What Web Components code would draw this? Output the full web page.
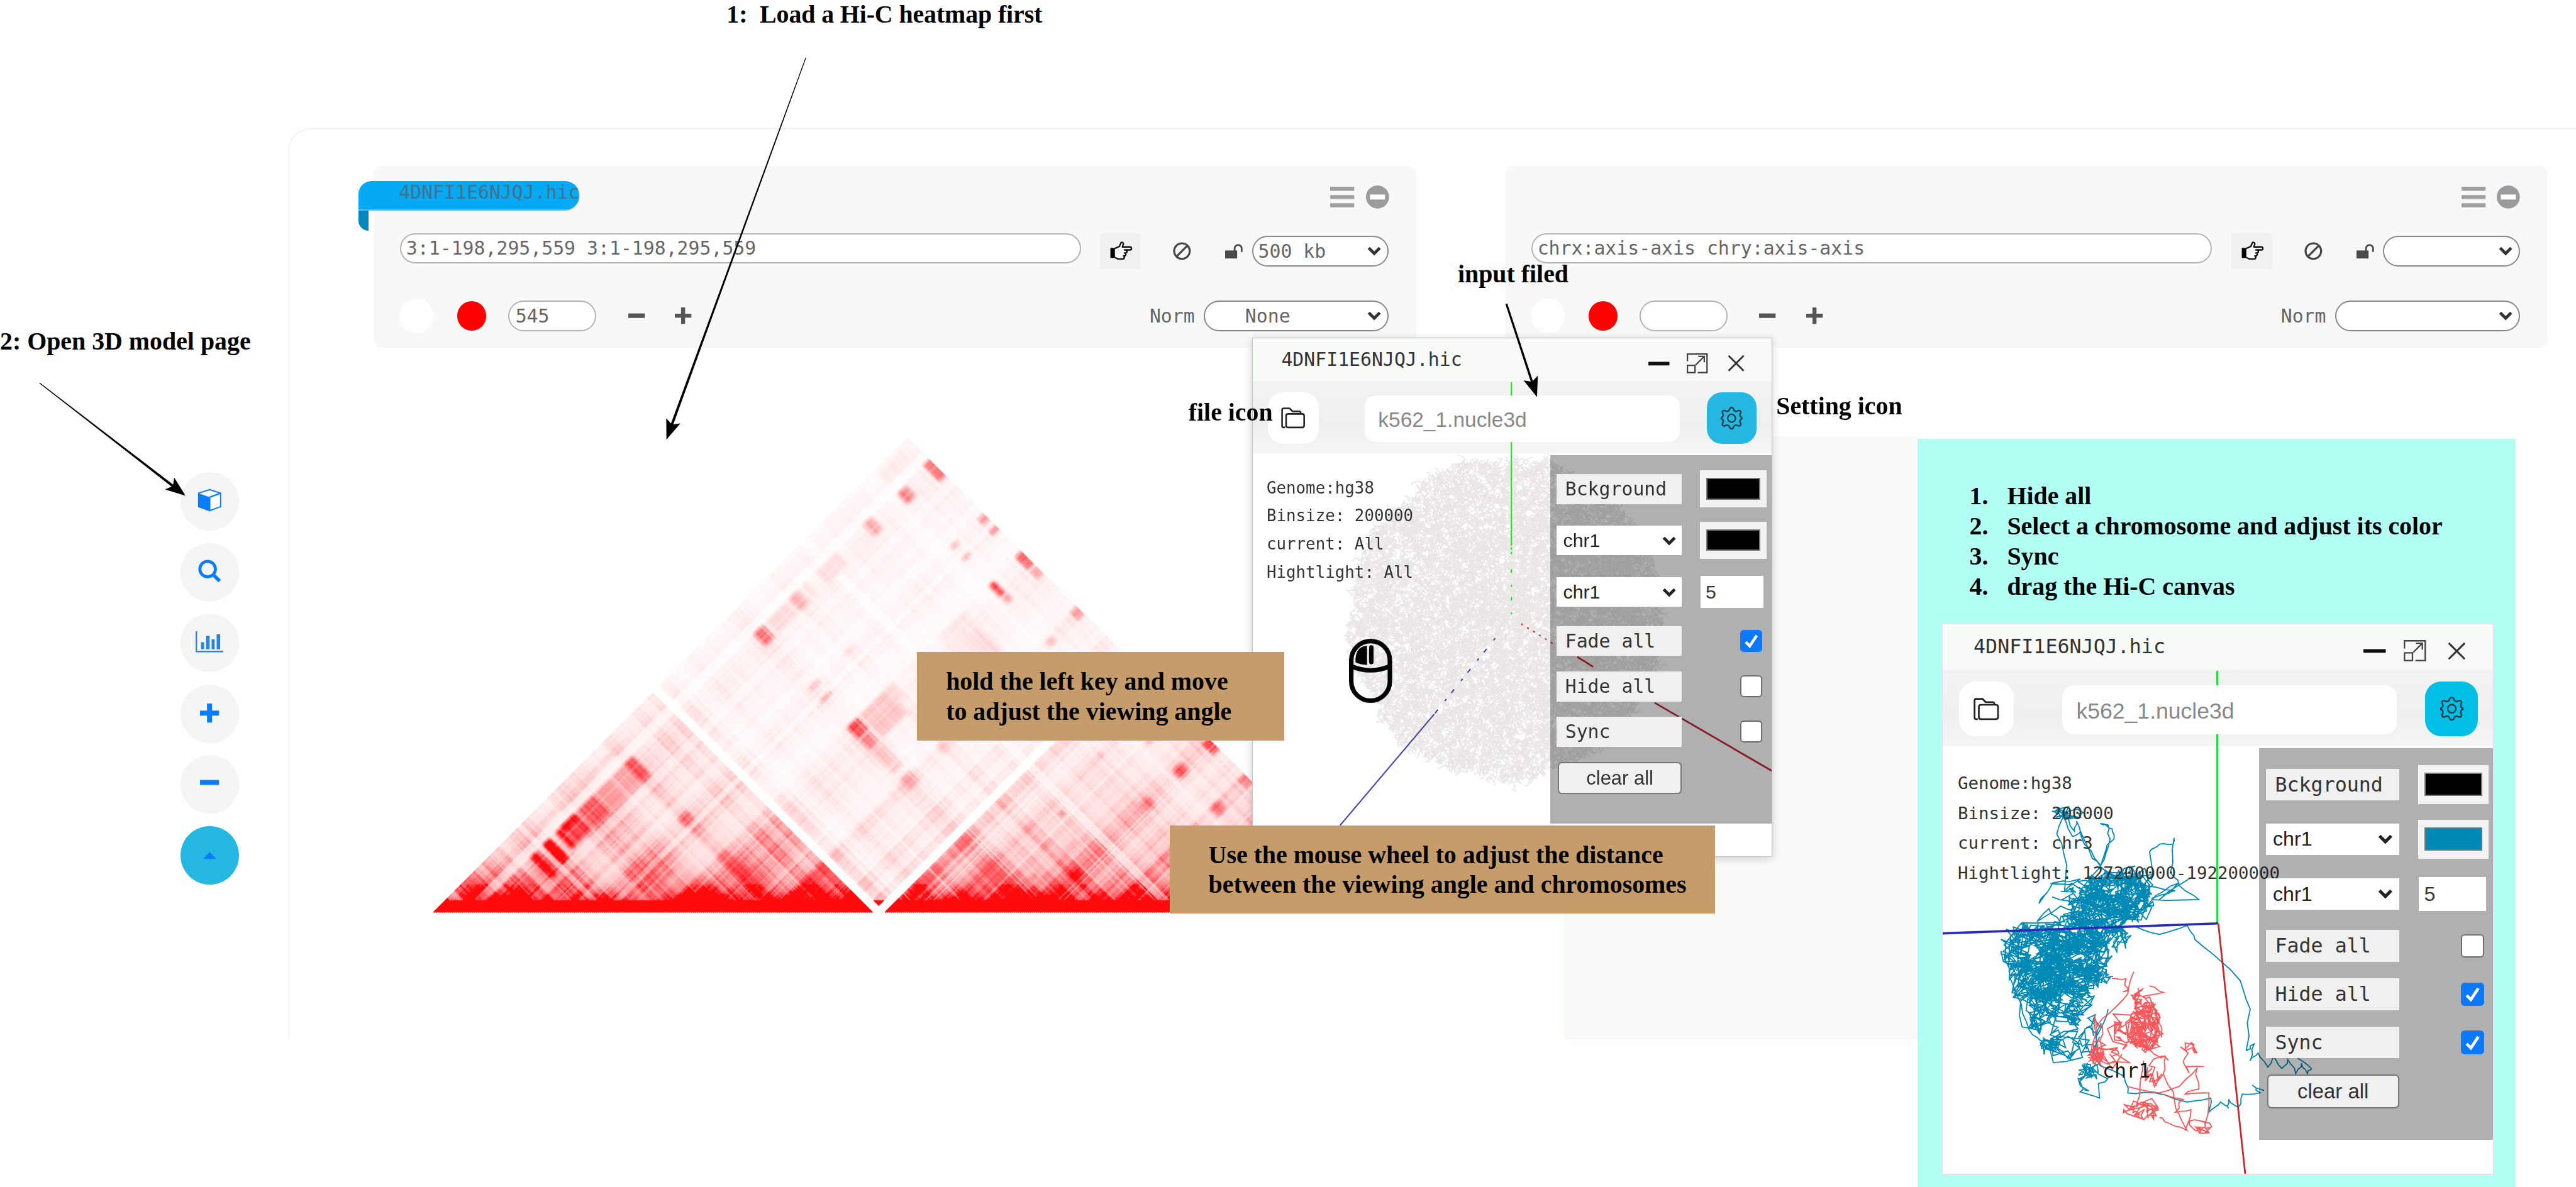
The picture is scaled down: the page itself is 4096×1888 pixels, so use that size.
<!DOCTYPE html>
<html lang="en">
<head>
<meta charset="utf-8">
<title>Hi-C 3D model guide</title>
<style>
html{--u:calc(100vw / 5137)}
body{margin:0;background:#fff;overflow:hidden}
</style>
</head>
<body>
<hic-guide></hic-guide>
<script>
/* "12u" in a style sheet is 12 design units; a window can rescale --u for its own content */
const css = (s) => s.replace(/(-?[\d.]+)u\b/g, 'calc(var(--u) * $1)');
const define = (name, style, html, after) => customElements.define(name, class extends HTMLElement {
  connectedCallback() {
    if (this.shadowRoot) return;
    const root = this.attachShadow({ mode: 'open' });
    const body = typeof html === 'function' ? html(this) : html;
    root.innerHTML = '<style>*{box-sizing:border-box}:host{box-sizing:border-box}' + css(style) + '</style>' + body;
    if (after) after(this, root);
  }
});
const rng = (seed) => () => {
  seed = (seed + 0x6D2B79F5) | 0;
  let t = Math.imul(seed ^ (seed >>> 15), 1 | seed);
  t = (t + Math.imul(t ^ (t >>> 7), 61 | t)) ^ t;
  return ((t ^ (t >>> 14)) >>> 0) / 4294967296;
};

/* ---------- icons ---------- */
const ICONS = {
  bars: ['48 41', '<path fill="#a0a0a0" d="M0 0h48v8H0zM0 16.500h48v8H0zM0 33h48v8H0z"/>'],
  disc: ['46 46', '<circle cx="23" cy="23" r="23" fill="#9b9b9e"/><path fill="#fff" d="M8 18h30v10H8z"/>'],
  hand: ['45 38', '<path d="M2 13h9v20H2z" fill="#000"/><path d="M11 14l9-4 3-7c1-2 5-1 5 2l-2 6h15c4 0 4 6 0 6H29M29 17h3c4 0 4 6 0 6h-2c4 0 3 6 0 6h-2c3 0 2 6-1 6H17l-6-3" fill="#fff" stroke="#111" stroke-width="3" stroke-linejoin="round"/>'],
  ban: ['36 36', '<circle cx="18" cy="18" r="15.500" fill="none" stroke="#444" stroke-width="4"/><path d="M28 8L8 28" stroke="#444" stroke-width="4"/>'],
  lock: ['36 30', '<path d="M0 13h24v16H0z" fill="#4a4a4a"/><path d="M19 14V9a7 7 0 0 1 14 0v7" fill="none" stroke="#4a4a4a" stroke-width="3.500"/>'],
  chev: ['28 18', '<path d="M3 3l11 11L25 3" fill="none" stroke="currentColor" stroke-width="6"/>'],
  minus: ['33 33', '<path d="M0 12h33v9H0z" fill="#555"/>'],
  plus: ['33 33', '<path d="M0 12.500h33v8H0zM12.500 0h8v33h-8z" fill="#555"/>'],
  cube: ['46 44', '<path d="M1 8L23 1l22 7v27L23 43 1 35z" fill="#fff" stroke="#0a7cff" stroke-width="2.500" stroke-linejoin="round"/><path d="M1 8l22 8v27L1 35z" fill="#0a7cff"/><path d="M23 16l22-8M23 16v27" stroke="#0a7cff" stroke-width="3"/>'],
  search: ['46 46', '<circle cx="19" cy="19" r="15.500" fill="none" stroke="#0a7cff" stroke-width="6"/><path d="M31 31l12 12" stroke="#0a7cff" stroke-width="7"/>'],
  chart: ['55 42', '<path d="M1.500 0v40.500H55" fill="none" stroke="#2b84dc" stroke-width="3"/><path d="M11 22h6v14h-6zM21 9h7v27h-7zM32 16h6v20h-6zM42 6h7v30h-7z" fill="#2b84dc"/>'],
  bigplus: ['38 38', '<path d="M0 14h38v10H0zM14 0h10v38H14z" fill="#0a7cff"/>'],
  bigminus: ['38 38', '<path d="M0 12h38v10H0z" fill="#0a7cff"/>'],
  up: ['26 14', '<path d="M0 14L13 0l13 14z" fill="#0a7cff"/>'],
  min: ['42 40', '<path d="M0 17h42v7H0z" fill="#111"/>'],
  max: ['42 40', '<path d="M1.500 16V1.500h39v37H22M1.500 24h15v14.500h-15zM18 23L35 6M23 6h12v12" fill="none" stroke="#444" stroke-width="2.800"/>'],
  close: ['34 32', '<path d="M2 1l30 30M32 1L2 31" stroke="#333" stroke-width="3.600"/>'],
  folder: ['48 42', '<path d="M8 40H5q-3 0-3-3V5q0-3 3-3h12l6 6h13q3 0 3 3v3M10 17q0-4 4-4h28q4 0 4 4v19q0 4-4 4H14q-4 0-4-4z" fill="none" stroke="#222" stroke-width="3.200"/>'],
  gear: ['16 16', '<circle cx="8" cy="8" r="2.700" fill="none" stroke="#173c48"/><path fill="none" stroke="#173c48" stroke-width="1" d="M9.300 1.600c-.4-1.300-2.200-1.300-2.600 0l-.1.300a1.900 1.900 0 0 1-2.700 1.100l-.3-.2c-1.200-.6-2.500.6-1.800 1.800l.2.300A1.900 1.900 0 0 1 .9 7.600V8.400A1.900 1.900 0 0 1 2 11.100l-.2.300c-.7 1.200.6 2.500 1.800 1.800l.3-.2a1.900 1.900 0 0 1 2.700 1.100l.1.300c.4 1.300 2.200 1.300 2.600 0l.1-.3a1.900 1.900 0 0 1 2.700-1.100l.3.200c1.200.7 2.500-.6 1.800-1.800l-.2-.3a1.900 1.900 0 0 1 1.100-2.700V7.600A1.900 1.900 0 0 1 14 4.900l.2-.3c.7-1.200-.6-2.400-1.800-1.800l-.3.200a1.900 1.900 0 0 1-2.700-1.100z"/>'],
  mouse: ['86 128', '<rect x="4.500" y="4.500" width="77" height="119" rx="38.500" fill="none" stroke="#000" stroke-width="9"/><path d="M5 55q38 16 76 0" fill="none" stroke="#000" stroke-width="9"/><path d="M36 14v38q-12 0-23-5c-1-20 6-32 23-33z"/><rect x="40" y="13" width="9" height="38" rx="4.500"/>']
};
define('ui-icon', ':host{display:block;flex:none}svg{display:block;width:100%;height:100%;overflow:visible}',
  (el) => { const [box, d] = ICONS[el.getAttribute('name')];
    const [w, h] = box.split(' ');
    return `<style>:host{width:calc(var(--u)*${w});height:calc(var(--u)*${h})}</style><svg viewBox="0 0 ${box}">${d}</svg>`; });

/* ---------- form fields ---------- */
define('pill-field', `
:host{display:flex;align-items:center;flex:none;height:61u;border:3.5u solid #b4b4b4;border-radius:31u;background:#fff;
 padding:0 12u;font:37.4u "DejaVu Sans Mono",monospace;line-height:1;color:#666;white-space:pre}
:host([kind=select]){border-color:#888;border-width:3u;padding-left:10u;padding-right:12u;justify-content:space-between}
ui-icon{color:#333}`,
  (el) => '<span><slot></slot></span>' + (el.getAttribute('kind') === 'select' ? '<ui-icon name="chev"></ui-icon>' : ''));

/* ---------- one contact-map control panel ---------- */
define('map-panel', `
:host{display:block;position:relative;flex:none;width:2079u;height:363u;background:#f8f8f8;border-radius:16u;padding:0 55u 0 52u;
 font:37.4u "DejaVu Sans Mono",monospace;color:#666}
.row{display:flex;align-items:center}
.head{height:124u;justify-content:flex-end;gap:23u}
.locus{height:93u}.scale{height:91u;margin-top:37u}
.locus pill-field{width:273u}
.locus .text{width:1358u;margin:0 38u 12u 0;padding-left:10u}
.go{width:82u;height:72u;background:#f1f1f2;display:grid;place-items:center;margin-right:64u}
.ban{margin-right:68u}.lock{margin:0 17u 0 0}
.dot{width:58u;height:58u;border-radius:50%;background:#f00;margin-right:44u}
.dot.w{width:67u;height:70u;background:#fff;margin-right:47u}
.scale .num{width:176u;margin-right:63u}
.minus{margin-right:60u}
.norm{margin:0 18u 0 auto;line-height:1}
.scale .nsel{width:369u;padding-left:0}
.scale .nsel span{margin-left:80u}
.ribbon{position:absolute;left:-31u;top:30u;width:441u;height:59u;border-radius:26u 28u 28u 0;background:#05a9f4;border-bottom:3u solid #6cb8f3;
 padding-left:81u;line-height:44u;color:#47708a;white-space:nowrap}
.tail{position:absolute;left:-31u;top:88u;width:20u;height:42u;border-radius:0 0 0 20u;background:#0487bf}`,
  (el) => `${el.hasAttribute('file') ? `<div class="tail"></div><div class="ribbon">${el.getAttribute('file')}</div>` : ''}
  <div class="row head"><ui-icon name="bars"></ui-icon><ui-icon name="disc"></ui-icon></div>
  <div class="row locus"><pill-field class="text">${el.getAttribute('locus')}</pill-field>
    <div class="go"><ui-icon name="hand"></ui-icon></div><ui-icon class="ban" name="ban"></ui-icon><ui-icon class="lock" name="lock"></ui-icon>
    <pill-field kind="select">${el.getAttribute('bin') || ''}</pill-field></div>
  <div class="row scale"><div class="dot w"></div><div class="dot"></div><pill-field class="num">${el.getAttribute('max') || ''}</pill-field>
    <ui-icon class="minus" name="minus"></ui-icon><ui-icon name="plus"></ui-icon>
    <span class="norm">Norm</span><pill-field class="nsel" kind="select"><span>${el.getAttribute('norm') || ''}</span></pill-field></div>`);

/* ---------- side tools ---------- */
define('tool-rail', `
:host{display:flex;flex-direction:column;gap:24.5u}
div{width:117u;height:116.700u;border-radius:50%;background:#f5f5f5;display:grid;place-items:center}
div:not(:last-child) ui-icon{margin-bottom:4u}
div:last-child{background:#23b7e1}`,
  () => ['cube', 'search', 'chart', 'bigplus', 'bigminus', 'up'].map((n) => `<div><ui-icon name="${n}"></ui-icon></div>`).join(''));

/* ---------- triangular contact map ---------- */
define('contact-map', ':host{display:block}canvas{display:block;width:100%;height:100%}', '<canvas width="1892" height="948"></canvas>',
  (el, root) => {
    const cx = root.querySelector('canvas').getContext('2d'), r = rng(17), N = 473, c = 4;
    /* contact patches: start and end of the first locus, of the second locus, strength */
    const patches = [
      [84, 160, 222, 232, .8], [84, 168, 300, 322, 1], [84, 158, 352, 375, 1.1], [84, 150, 400, 420, .8], [84, 150, 424, 480, .6], [84, 100, 420, 470, .9], [84, 155, 486, 550, .48],
      [84, 160, 556, 668, .26], [84, 158, 670, 706, .48], [34, 42, 120, 700, .16], [196, 206, 240, 300, .5], [300, 332, 670, 705, .45], [340, 352, 420, 560, .3], [455, 500, 672, 702, .4],
      [520, 545, 680, 712, .6], [455, 500, 520, 600, .25], [300, 335, 455, 500, .5], [384, 396, 440, 560, .4], [610, 625, 680, 700, .4],
      [82, 130, 1190, 1228, .38], [82, 130, 1240, 1318, .1], [82, 130, 1328, 1366, .2], [82, 130, 1380, 1400, .1], [82, 130, 1440, 1520, .09], [82, 130, 1625, 1660, .22], [90, 130, 1756, 1792, .34],
      [84, 150, 1866, 1892, .4], [10, 50, 1760, 1850, .06], [300, 325, 1866, 1892, .3], [345, 365, 1864, 1892, .26], [300, 312, 1755, 1785, .22], [345, 358, 1755, 1785, .18],
      [450, 500, 1866, 1892, .48], [510, 540, 1866, 1890, .26], [455, 500, 1756, 1776, .55], [505, 530, 1756, 1780, .22], [455, 640, 1560, 1660, .07], [520, 610, 1620, 1650, .1], [670, 702, 1864, 1892, .26], [680, 700, 1756, 1785, .16],
      [300, 312, 1190, 1230, .2], [345, 358, 1190, 1230, .2], [455, 500, 1190, 1232, .55], [505, 545, 1190, 1228, .34], [455, 545, 1240, 1340, .16], [550, 640, 1190, 1230, .15], [665, 706, 1190, 1230, .24], [455, 500, 1345, 1370, .12], [300, 312, 1330, 1365, .12], [670, 700, 1330, 1360, .14],
      [1190, 1224, 1338, 1368, .9], [1190, 1224, 1622, 1655, .4], [1190, 1224, 1752, 1790, .5], [1196, 1240, 1866, 1892, .6], [1340, 1372, 1752, 1790, .45], [1340, 1372, 1866, 1892, .4],
      [1340, 1372, 1622, 1655, .55], [1010, 1028, 1190, 1225, .4], [1075, 1090, 1190, 1225, .45], [1010, 1028, 1340, 1365, .3], [1075, 1090, 1340, 1365, .35], [1130, 1142, 1340, 1420, .3], [1050, 1062, 1440, 1455, .4], [1120, 1135, 1250, 1275, .4], [1010, 1022, 1625, 1650, .2], [1075, 1090, 1755, 1780, .22], [1430, 1450, 1622, 1650, .4], [1530, 1550, 1750, 1785, .4], [1620, 1655, 1756, 1790, .6], [1620, 1655, 1866, 1892, .5], [1756, 1785, 1866, 1892, .7]];
    const fine = [], tone = [], tad = []; let left = 0, t = 1, id = 0;
    const bands = [[56, 82, .35], [164, 190, .6], [336, 350, .45], [560, 664, .66], [380, 450, .55], [230, 296, .55], [1466, 1490, .3], [1250, 1330, .65], [1700, 1740, .5], [950, 985, .7],
      [84, 150, 1.12], [300, 332, 1.2], [455, 500, 1.2], [670, 706, 1.2], [1010, 1028, 1.3], [1075, 1090, 1.3], [1190, 1224, 1.35], [1340, 1372, 1.3], [1622, 1655, 1.25], [1756, 1790, 1.25]];
    for (let i = 0; i < N; i++) {
      const p = i * c;
      if (left-- <= 0) { id++; left = 2 + r() * 8; t = .62 + r() * .72; }
      tad[i] = id; tone[i] = t; fine[i] = (i ? fine[i - 1] * .3 : .3) + .7 * (.62 + .78 * r());
      if (r() < .03) fine[i] = .45;
      for (const [a, b, k] of bands) if (p >= a && p <= b) tone[i] *= k;
    }
    const gap = (p) => p > 872 && p < 897;
    const ramp = (q) => { q = Math.max(0, Math.min(1, q)); return q * q * (3 - 2 * q); };
    const edge = (x, lo, hi) => ramp((x - lo + 10) / 20) * ramp((hi + 10 - x) / 20);
    for (let i = 0; i < N; i++) {
      const a = i * c, row = patches.filter((q) => a > q[0] - 11 && a < q[1] + 11);
      for (let j = i; j < N; j++) {
        const b = j * c, h = (b - a) / 2; let v;
        if (gap(a) || gap(b)) v = .004;
        else {
          const m = fine[i] * fine[j] * tone[i] * tone[j];
          if ((a < 884) === (b < 884)) {
            v = Math.pow(42 / (h + 3), 1.2) * (.12 + .95 * m) * (tad[i] === tad[j] ? 1.3 : 1);
            if (h > 55) v = v > .55 ? .55 + (v - .55) * .35 : v;
            v += .015;
          } else v = .01 + .03 * m + .1 * Math.exp(-h / 210) * m;
          for (const q of row) { const e = edge(a, q[0], q[1]) * edge(b, q[2], q[3]);
            if (e) v = Math.max(v, v * (1 - e) + e * q[4] * (.45 + .7 * fine[i] * fine[j])); }
          if (h < 24) v = 1;
        }
        cx.fillStyle = `rgba(255,0,${v > .95 ? 0 : 12},${Math.min(1, v)})`;
        const x = (a + b) / 2 + c / 2, y = 946 - h;
        cx.beginPath(); cx.moveTo(x - c / 2 - .2, y); cx.lineTo(x, y - c / 2 - .2); cx.lineTo(x + c / 2 + .2, y); cx.lineTo(x, y + c / 2 + .2); cx.fill();
      }
    }
  });

/* ---------- 3D scenes ---------- */
define('sphere-scene', ':host{display:block}canvas,svg{position:absolute;inset:0;width:100%;height:100%;display:block}',
  `<canvas width="1037" height="1037"></canvas><svg viewBox="0 0 1037 1037" fill="none" stroke-width="2.600">
   <path stroke="#1fe01f" d="M516.500 88V415"/><path stroke="#1fe01f" d="M516.500 418V436" stroke-dasharray="5 4"/><path stroke="#1fe01f" d="M516.500 462V570" stroke-dasharray="7 24 4 20"/>
   <path stroke="#4a41a8" d="M362 752L174 974"/><path stroke="#4a41a8" d="M484 600L362 752" stroke-dasharray="5 22 9 16"/>
   <path stroke="#c0263c" d="M536 571L605 614" stroke-dasharray="4 10"/><path stroke="#c0263c" stroke-width="3.500" d="M648 637l32 20M803 729l234 136"/></svg>`,
  (el, root) => {
    const cx = root.querySelector('canvas').getContext('2d'), r = rng(5);
    cx.strokeStyle = '#e9e6e5'; cx.lineWidth = 1.9;
    for (let k = 0; k < 10500; k++) {
      const an = r() * 6.283, q = Math.pow(r(), .53), wob = 1 + .015 * Math.sin(an * 9) + .01 * Math.sin(an * 23);
      let x = 506 + Math.cos(an) * q * 312 * wob, y = 561 + Math.sin(an) * q * 320 * wob;
      cx.beginPath(); cx.moveTo(x, y);
      for (let s = 0; s < 4; s++) { x += (r() - .5) * 16; y += (r() - .5) * 16; cx.lineTo(x, y); }
      cx.stroke();
    }
  });

define('strand-scene', ':host{display:block}svg{position:absolute;inset:0;width:100%;height:100%;display:block}text{font:40px "DejaVu Sans Mono",monospace}',
  () => {
    const r = rng(29), px = (x, y) => [(x / 1.2645 - 72), (y / 1.9406 + 316)];
    const line = (p) => 'M' + p.map(([x, y]) => px(x, y).map((n) => n.toFixed(1)).join(' ')).join('L');
    /* jitter a guide strand so that it reads as a chain of short segments */
    const strand = (p, j) => { const o = []; for (let i = 0; i < p.length - 1; i++) for (let k = 0; k < 3; k++) {
      const f = k / 3; o.push([p[i][0] + (p[i + 1][0] - p[i][0]) * f + (k ? (r() - .5) * j : 0), p[i][1] + (p[i + 1][1] - p[i][1]) * f + (k ? (r() - .5) * j : 0)]); }
      o.push(p[p.length - 1]); return line(o); };
    /* a chain that wanders over the whole ellipse around (cx, cy) */
    const tangle = (cx, cy, rx, ry, n) => { const o = [], f1 = .11 + r() * .2, f2 = .17 + r() * .2, ph = r() * 6, jx = Math.min(22, rx * .4), jy = Math.min(30, ry * .4);
      for (let i = 0; i < n; i++) { const q = .25 + .6 * Math.abs(Math.sin(i * f2 * .43 + ph)), a = i * f1 + ph + Math.sin(i * f2) * 1.6;
        o.push([cx + Math.cos(a) * rx * q + (r() - .5) * 2 * jx, cy + Math.sin(a) * ry * q + (r() - .5) * 2 * jy]); }
      return line(o); };
    const teal = [[525, 430, 90, 85, 300], [495, 500, 90, 80, 280], [575, 440, 50, 110, 120], [440, 590, 90, 75, 240], [320, 650, 80, 95, 270], [430, 680, 85, 95, 290], [300, 740, 40, 70, 80],
      [340, 790, 65, 85, 210], [410, 740, 85, 85, 220], [400, 850, 78, 85, 130], [335, 880, 42, 90, 120], [400, 930, 55, 60, 40], [405, 1030, 60, 65, 80], [465, 1150, 42, 65, 50], [415, 115, 45, 28, 30], [490, 740, 32, 50, 50], [535, 610, 28, 60, 44], [390, 430, 58, 60, 22], [465, 980, 28, 80, 34]]
      .map((a) => tangle(...a)).join('') + [
      [[370, 115], [410, 95], [380, 200], [405, 320], [400, 420], [440, 375], [370, 390], [335, 470], [355, 430]],
      [[395, 130], [420, 210], [440, 190], [470, 295], [500, 340], [530, 380]], [[400, 125], [425, 190], [430, 150], [450, 240], [490, 320]],
      [[490, 160], [520, 180], [525, 220], [505, 260], [490, 330], [560, 390]], [[490, 160], [510, 165], [515, 220], [500, 300], [450, 400]],
      [[620, 380], [615, 270], [640, 240], [675, 240], [677, 215], [668, 350], [690, 400], [740, 455], [620, 455]],
      [[600, 400], [680, 420], [640, 455], [720, 370]], [[600, 500], [630, 440], [690, 390], [665, 430], [620, 450]],
      [[290, 545], [390, 545], [360, 490], [330, 540], [390, 480], [420, 500]], [[250, 620], [250, 690], [270, 790], [290, 860], [310, 960], [345, 1010], [375, 1020]],
      [[580, 560], [640, 590], [710, 555], [730, 610], [800, 700], [845, 770], [870, 880], [860, 1040], [880, 1015], [870, 1080], [890, 1050], [915, 1105], [930, 1065], [950, 1110], [965, 1075], [985, 1130], [1000, 1090], [1015, 1130], [1025, 1110], [990, 1070]],
      [[510, 880], [490, 960], [470, 1040], [490, 1100], [550, 1140], [560, 1205], [630, 1205], [710, 1240], [770, 1225], [765, 1280], [795, 1240], [815, 1265], [815, 1230], [840, 1260], [850, 1210], [895, 1205], [875, 1175], [905, 1195]]
    ].map((p) => strand(p, 9)).join('');
    const red = [[605, 960, 42, 95, 150], [560, 960, 60, 70, 60], [520, 1050, 58, 60, 46], [600, 850, 36, 50, 50], [595, 1275, 40, 45, 60], [480, 990, 22, 90, 26], [725, 1080, 36, 62, 20], [745, 1335, 28, 28, 26], [535, 790, 28, 35, 8], [635, 1120, 28, 60, 24]]
      .map((a) => tangle(...a)).join('') + [
      [[575, 735], [560, 820], [510, 900], [480, 950], [465, 1060], [500, 1110]], [[615, 790], [650, 815], [600, 830], [640, 900], [645, 990]],
      [[595, 1020], [640, 1065], [655, 1065], [650, 1130], [675, 1200], [690, 1290], [710, 1350], [660, 1320], [640, 1300]],
      [[560, 1180], [640, 1205], [690, 1180], [735, 1110], [740, 1190], [705, 1210], [765, 1205], [755, 1330]], [[600, 1080], [590, 1200], [580, 1260]],
      [[650, 1210], [700, 1230], [680, 1280], [720, 1270], [705, 1350]]
    ].map((p) => strand(p, 10)).join('');
    return `<svg viewBox="0 0 1102.500 1099" preserveAspectRatio="none" fill="none">
    <path stroke="#0089b5" stroke-width="2.300" d="${teal}"/><path stroke="#fb5659" stroke-width="2.300" d="${red}"/>
    <path stroke="#22dd44" stroke-width="4" d="M550 93V598"/><path stroke="#2a2ab8" stroke-width="4.500" d="M0 618L552 598"/><path stroke="#c8282c" stroke-width="3.500" d="M552 598L606 1099"/>
    <text x="320" y="906" fill="#1a1a1a">chr1</text></svg>`;
  });

/* ---------- 3D model window ---------- */
define('tick-box', `
:host{display:grid;place-items:center;width:43u;height:44u;border:3u solid #6d6d6d;border-radius:7u;background:#fff}
:host([on]){background:#0a78ff;border-color:#0a78ff}svg{width:34u;height:34u;display:block}`,
  (el) => el.hasAttribute('on') ? '<svg viewBox="0 0 34 34"><path d="M6 19l8 8L28 6" fill="none" stroke="#fff" stroke-width="5.500"/></svg>' : '');

define('model-window', `
:host{display:grid;grid-template-rows:88u 142u 1fr;position:absolute;isolation:isolate;width:1038u;height:1037u;background:#fff;border:2.5u solid #c4c4c4;
 font:37.400u "DejaVu Sans Mono",monospace;color:#333;overflow:hidden}
.title{display:flex;align-items:center;margin:-2.5u -2.5u 0;padding:0 56u 0 60u;background:#f8faf8}
.title span{margin-right:auto;line-height:1}
.title ui-icon{margin-top:15u}.title .b{margin:15u 40u 0 34u}
.bar{display:flex;align-items:center;margin:-2.5u -2.5u 0;height:144u;padding:4u 33u 0;background:linear-gradient(#f2f3f3,#efefef 60%,#f5f5f5)}
.bar>*{position:relative;z-index:1}
.btn{width:102u;height:103u;border-radius:30u;background:#fff;display:grid;place-items:center}
.in{width:629u;height:93u;margin:3u 53u 0 91u;border-radius:22u;background:#fff;padding-left:27u;font:42u/97u "Liberation Sans",sans-serif;color:#888}
.gear{width:99u;background:var(--accent,#23b7e1)}
.gear ui-icon{width:46u;height:48u}
.body{display:grid;grid-template-columns:593.500u 1fr;margin-top:-2.500u}
.info{position:relative;z-index:1;padding:43.5u 0 0 28u;font-size:32.4u;line-height:56.200u;white-space:pre}
.ctl{position:relative;z-index:1;margin:6u -2.5u 0 0;height:735u;background:rgba(0,0,0,.31);display:grid;align-content:start;align-items:center;
 grid-template-columns:250u 133u;column-gap:35.500u;padding:17u 0 0 13u;grid-template-rows:102u 103u 103u 92u 89u 92u 92u}
.lab{height:60u;line-height:60u;background:#f0f0f0;padding-left:17u}
.sel{height:59u;background:#fff;display:flex;align-items:center;justify-content:space-between;padding:0 12u 0 13u;font:38u "Liberation Sans",sans-serif;color:#222}
.sw{height:74u;background:#f3f3f3;padding:15u 12.500u}
.sw i{display:block;height:43u;background:#000;border:3u solid #777}
.num{width:126u;height:64u;margin-left:1.500u;background:#fff;padding-left:10u;font:38u/64u "Liberation Sans",sans-serif}
tick-box{justify-self:end;margin-right:9u}
.clr{height:64u;margin-left:2u;background:#f0f0f0;border:3u solid #777;border-radius:8u;text-align:center;font:38.800u/59u "Liberation Sans",sans-serif}
::slotted([slot=scene]){position:absolute;inset:0}`,
  (el) => { const on = (k) => el.getAttribute('on').includes(k) ? ' on' : '';
    const sel = '<div class="sel"><span>chr1</span><ui-icon name="chev"></ui-icon></div>';
    return `<div class="title"><span>4DNFI1E6NJQJ.hic</span><ui-icon name="min"></ui-icon><ui-icon class="b" name="max"></ui-icon><ui-icon name="close"></ui-icon></div>
  <div class="bar"><div class="btn"><ui-icon name="folder"></ui-icon></div><div class="in">k562_1.nucle3d</div><div class="btn gear"><ui-icon name="gear"></ui-icon></div></div>
  <slot name="scene"></slot>
  <div class="body"><div class="info"><div>Genome:hg38</div><div>Binsize: 200000</div><div>current: ${el.getAttribute('current')}</div><div>Hightlight: ${el.getAttribute('highlight')}</div></div>
  <div class="ctl"><div class="lab">Bckground</div><div class="sw"><i></i></div>
   ${sel}<div class="sw"><i style="background:${el.getAttribute('color')}"></i></div>
   ${sel}<div class="num">5</div>
   <div class="lab">Fade all</div><tick-box${on('fade')}></tick-box>
   <div class="lab">Hide all</div><tick-box${on('hide')}></tick-box>
   <div class="lab">Sync</div><tick-box${on('sync')}></tick-box>
   <div class="clr">clear all</div></div></div>`; });

/* ---------- annotations ---------- */
define('guide-note', `
:host{display:block;position:absolute;font:bold 50u/60u "Liberation Serif",serif;color:#000;white-space:pre}
:host([boxed]){background:#c69c6b}`, '<slot></slot>');

define('guide-arrows', ':host{display:block;position:absolute;inset:0}svg{display:block;width:100%;height:100%}',
  () => {
    const arrow = (x1, y1, x2, y2, w1, w2, len = 40, half = 15) => {
      const d = Math.hypot(x2 - x1, y2 - y1), ux = (x2 - x1) / d, uy = (y2 - y1) / d, at = (l, s) => `${(x2 - ux * l - uy * s).toFixed(1)} ${(y2 - uy * l + ux * s).toFixed(1)}`;
      return `<path d="M${at(d, w1 / 2)}L${at(len * .7, w2 / 2)}L${at(len * .7, -w2 / 2)}L${at(d, -w1 / 2)}Z"/><path d="M${at(0, 0)}L${at(len, half)}L${at(len * .8, 0)}L${at(len, -half)}Z"/>`;
    };
    return `<svg viewBox="0 0 5137 2368">${arrow(1607, 115, 1329, 877, 1.5, 5)}${arrow(79, 764, 370, 989, 1.5, 5)}${arrow(3004, 606, 3065, 792, 4, 4.5)}</svg>`;
  });

/* ---------- page ---------- */
define('hic-guide', `
:host{display:grid;grid-template-columns:575u 1fr;position:relative;width:5137u;height:2368u;overflow:hidden;background:#fff}
tool-rail{margin:942u 0 0 359.500u;width:117u}
.frame{margin-top:254u;height:1820u;border:solid #f4f4f4;border-width:4.500u 0 0 3u;border-radius:46u 0 0 0}
.maps{display:flex;gap:177u;padding:73u 0 0 168u}
.canvases{display:flex;justify-content:space-between;padding:177u 1312u 0 287u}
contact-map{width:1892u;height:948u;margin-top:2u}
.blank{width:706u;height:1203u;background:#f8faf8}
.steps{position:absolute;left:3824.500u;top:876u;width:1191.500u;height:1492u;background:#b2fff3;padding:84u 0 0 103u;font:bold 50u/60u "Liberation Serif",serif}
ol{margin:0;padding:0;list-style:none}
li{display:grid;grid-template-columns:75u 1fr;white-space:nowrap}
.a{left:2496.500u;top:673u;box-shadow:0 4u 16u rgba(0,0,0,.2)}
.b{--u:calc(100vw / 5137 * 1.0622);--accent:#00bfe6;left:calc(100vw / 5137 * 3872);top:calc(100vw / 5137 * 1242.500);border-color:#e8dfe8}
.mouse{position:absolute;left:2690u;top:1274u}
`, `
<tool-rail></tool-rail>
<div class="frame">
  <div class="maps">
    <map-panel file="4DNFI1E6NJQJ.hic" locus="3:1-198,295,559 3:1-198,295,559" bin="500 kb" max="545" norm="None"></map-panel>
    <map-panel locus="chrx:axis-axis chry:axis-axis"></map-panel>
  </div>
  <div class="canvases"><contact-map></contact-map><div class="blank"></div></div>
</div>
<div class="steps"><ol>
  <li><span>1.</span><span>Hide all</span></li><li><span>2.</span><span>Select a chromosome and adjust its color</span></li>
  <li><span>3.</span><span>Sync</span></li><li><span>4.</span><span>drag the Hi-C canvas</span></li></ol></div>
<model-window class="a" current="All" highlight="All" color="#000" on="fade"><sphere-scene slot="scene"></sphere-scene></model-window>
<model-window class="b" current="chr3" highlight="127200000-192200000" color="#0089b5" on="hide sync"><strand-scene slot="scene"></strand-scene></model-window>
<ui-icon class="mouse" name="mouse"></ui-icon>
<guide-note style="left:calc(var(--u)*1449);top:calc(var(--u)*-1);letter-spacing:calc(var(--u)*-.13)">1:  Load a Hi-C heatmap first</guide-note>
<guide-note style="left:0;top:calc(var(--u)*651)">2: Open 3D model page</guide-note>
<guide-note style="left:calc(var(--u)*2907);top:calc(var(--u)*517)">input filed</guide-note>
<guide-note style="left:calc(var(--u)*2370);top:calc(var(--u)*792)">file icon</guide-note>
<guide-note style="left:calc(var(--u)*3542);top:calc(var(--u)*780)">Setting icon</guide-note>
<guide-note boxed style="left:calc(var(--u)*1828.5);top:calc(var(--u)*1301);width:calc(var(--u)*733);height:calc(var(--u)*176);padding:calc(var(--u)*29) 0 0 calc(var(--u)*58)">hold the left key and move
to adjust the viewing angle</guide-note>
<guide-note boxed style="left:calc(var(--u)*2333);top:calc(var(--u)*1647);width:calc(var(--u)*1087);height:calc(var(--u)*175);padding:calc(var(--u)*28) 0 0 calc(var(--u)*77)">Use the mouse wheel to adjust the distance
between the viewing angle and chromosomes</guide-note>
<guide-arrows></guide-arrows>`);
</script>
</body>
</html>
